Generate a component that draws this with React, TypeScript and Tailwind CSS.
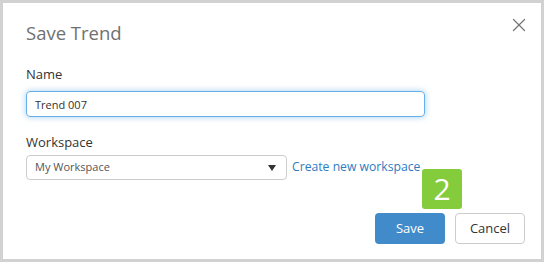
import { X } from "lucide-react";

export default function App() {
  return (
    <div className="h-[262px] w-[544px] bg-[#d2d2d2] p-[3px] font-['Open_Sans',sans-serif]">
      <div className="relative flex h-full flex-col bg-white pl-[23px] pr-[16px]">
        <div className="flex items-start justify-between pt-[18px]">
          <h1 className="text-[18.5px] leading-[24px] text-[#707070]">Save Trend</h1>
          <button className="-mt-[7px] -mr-[5px] text-[#777]">
            <X size={22} strokeWidth={1.4} />
          </button>
        </div>

        <label className="mt-[20px] text-[13px] leading-[18px] text-[#333]">Name</label>
        <input
          defaultValue="Trend 007"
          className="mt-[8px] h-[26px] w-[399px] rounded-[4px] border border-[#66afe9] px-[8px] text-[11px] text-[#333] shadow-[0_0_6px_rgba(102,175,233,0.6)] outline-none"
        />

        <label className="mt-[16px] text-[13px] leading-[18px] text-[#333]">Workspace</label>
        <div className="mt-[4px] flex items-center gap-[5px]">
          <div className="flex h-[25px] w-[261px] items-center justify-between rounded-[4px] border border-[#ccc] pl-[8px] pr-[10px] text-[11px] text-[#555]">
            <span>My Workspace</span>
            <span className="h-0 w-0 border-x-[4px] border-t-[6px] border-x-transparent border-t-[#333]" />
          </div>
          <a className="text-[12.2px] text-[#2f7bbf]">Create new workspace</a>
        </div>

        <div className="mt-auto mb-[15px] flex justify-end gap-[10px]">
          <button className="h-[31px] w-[70px] rounded-[4px] bg-[#428bca] text-[13px] text-white">Save</button>
          <button className="h-[31px] w-[70px] rounded-[4px] border border-[#ccc] bg-white text-[13px] text-[#333]">Cancel</button>
        </div>

        <div className="absolute left-[419px] top-[166px] flex h-[40px] w-[40px] items-center justify-center rounded-[3px] bg-[#84cc3c] text-[30px] leading-none text-white">
          2
        </div>
      </div>
    </div>
  );
}
